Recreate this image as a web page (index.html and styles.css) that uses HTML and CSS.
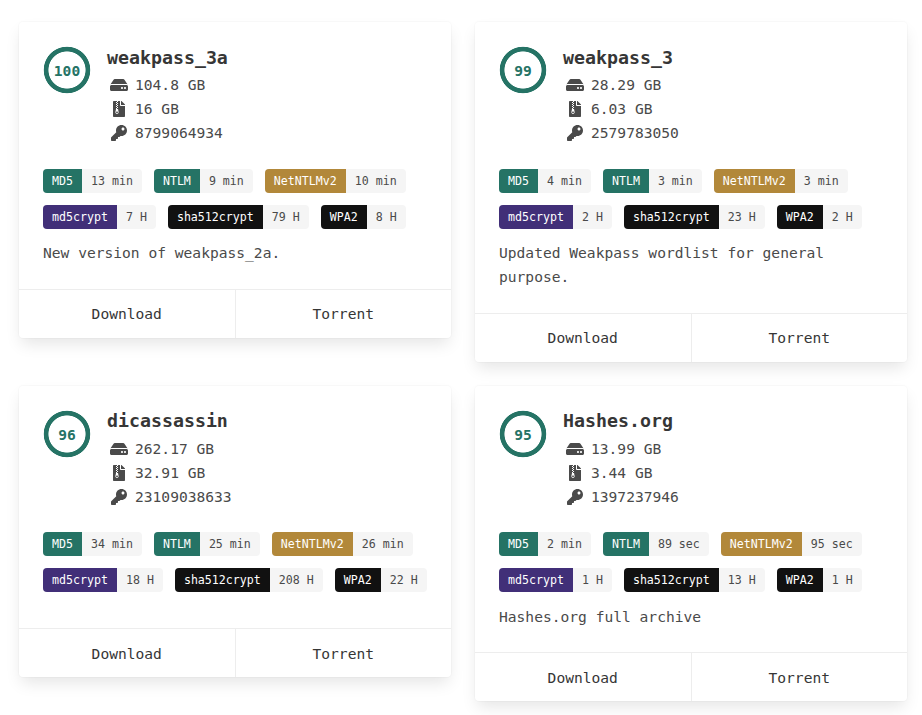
FILE: index.html
```html
<!DOCTYPE html>
<html lang="en">
<head>
<meta charset="utf-8">
<title>Wordlists</title>
<link rel="stylesheet" href="styles.css">
</head>
<body>
<svg class="sprite" aria-hidden="true">
  <symbol id="hdd" viewBox="0 0 576 512"><path d="M576 304v96c0 26.51-21.49 48-48 48H48c-26.51 0-48-21.49-48-48v-96c0-26.51 21.49-48 48-48h480c26.51 0 48 21.49 48 48zm-48-80a79.557 79.557 0 0 1 30.777 6.165L462.25 85.374A48.003 48.003 0 0 0 422.311 64H153.689a48 48 0 0 0-39.938 21.374L17.223 230.165A79.557 79.557 0 0 1 48 224h480zm-48 96c-17.673 0-32 14.327-32 32s14.327 32 32 32 32-14.327 32-32-14.327-32-32-32zm-96 0c-17.673 0-32 14.327-32 32s14.327 32 32 32 32-14.327 32-32-14.327-32-32-32z"/></symbol>
  <symbol id="zip" viewBox="0 0 384 512"><path d="M377 105L279.1 7c-4.5-4.5-10.6-7-17-7H256v128h128v-6.1c0-6.3-2.5-12.4-7-16.9zM128.4 336c-17.9 0-32.4 12.1-32.4 27 0 15 14.6 27 32.5 27s32.4-12.1 32.4-27-14.6-27-32.5-27zM224 136V0h-63.6v32h-32V0H24C10.7 0 0 10.7 0 24v464c0 13.3 10.7 24 24 24h336c13.3 0 24-10.7 24-24V160H248c-13.2 0-24-10.8-24-24zM95.9 32h32v32h-32zm32.3 384c-33.2 0-58-30.4-51.4-62.9L96.4 256v-32h32v-32h-32v-32h32v-32h-32V96h32V64h32v32h-32v32h32v32h-32v32h32v32h-32v32h22.1c5.7 0 10.7 4.1 11.8 9.7l17.3 87.7c6.4 32.4-18.4 62.6-51.4 62.6z"/></symbol>
  <symbol id="key" viewBox="0 0 512 512"><path d="M512 176.001C512 273.203 433.202 352 336 352c-11.22 0-22.19-1.062-32.827-3.069l-24.012 27.014A23.999 23.999 0 0 1 261.223 384H224v40c0 13.255-10.745 24-24 24h-40v40c0 13.255-10.745 24-24 24H24c-13.255 0-24-10.745-24-24v-78.059c0-6.365 2.529-12.47 7.029-16.971l161.802-161.802C163.108 213.814 160 195.271 160 176 160 78.798 238.797.001 335.999 0 433.488-.001 512 78.511 512 176.001zM336 128c0 26.51 21.49 48 48 48s48-21.49 48-48-21.49-48-48-48-48 21.49-48 48z"/></symbol>
</svg>
<main class="cards">
  <article class="card">
    <div class="content">
      <header class="media">
        <div class="score">100</div>
        <div class="info">
          <h2 class="title">weakpass_3a</h2>
          <p class="stat"><span class="icon"><svg class="hdd"><use href="#hdd"/></svg></span>104.8 GB</p>
          <p class="stat"><span class="icon"><svg class="zip"><use href="#zip"/></svg></span>16 GB</p>
          <p class="stat"><span class="icon"><svg class="key"><use href="#key"/></svg></span>8799064934</p>
        </div>
      </header>
      <div class="tags">
        <div class="tag"><b class="teal">MD5</b><span>13 min</span></div>
        <div class="tag"><b class="teal">NTLM</b><span>9 min</span></div>
        <div class="tag"><b class="gold">NetNTLMv2</b><span>10 min</span></div>
        <div class="tag"><b class="purple">md5crypt</b><span>7 H</span></div>
        <div class="tag"><b class="black">sha512crypt</b><span>79 H</span></div>
        <div class="tag"><b class="black">WPA2</b><span>8 H</span></div>
      </div>
      <p class="note">New version of weakpass_2a.</p>
    </div>
    <footer class="actions"><a>Download</a><a>Torrent</a></footer>
  </article>
  <article class="card">
    <div class="content">
      <header class="media">
        <div class="score">99</div>
        <div class="info">
          <h2 class="title">weakpass_3</h2>
          <p class="stat"><span class="icon"><svg class="hdd"><use href="#hdd"/></svg></span>28.29 GB</p>
          <p class="stat"><span class="icon"><svg class="zip"><use href="#zip"/></svg></span>6.03 GB</p>
          <p class="stat"><span class="icon"><svg class="key"><use href="#key"/></svg></span>2579783050</p>
        </div>
      </header>
      <div class="tags">
        <div class="tag"><b class="teal">MD5</b><span>4 min</span></div>
        <div class="tag"><b class="teal">NTLM</b><span>3 min</span></div>
        <div class="tag"><b class="gold">NetNTLMv2</b><span>3 min</span></div>
        <div class="tag"><b class="purple">md5crypt</b><span>2 H</span></div>
        <div class="tag"><b class="black">sha512crypt</b><span>23 H</span></div>
        <div class="tag"><b class="black">WPA2</b><span>2 H</span></div>
      </div>
      <p class="note">Updated Weakpass wordlist for general purpose.</p>
    </div>
    <footer class="actions"><a>Download</a><a>Torrent</a></footer>
  </article>
  <article class="card">
    <div class="content">
      <header class="media">
        <div class="score">96</div>
        <div class="info">
          <h2 class="title">dicassassin</h2>
          <p class="stat"><span class="icon"><svg class="hdd"><use href="#hdd"/></svg></span>262.17 GB</p>
          <p class="stat"><span class="icon"><svg class="zip"><use href="#zip"/></svg></span>32.91 GB</p>
          <p class="stat"><span class="icon"><svg class="key"><use href="#key"/></svg></span>23109038633</p>
        </div>
      </header>
      <div class="tags">
        <div class="tag"><b class="teal">MD5</b><span>34 min</span></div>
        <div class="tag"><b class="teal">NTLM</b><span>25 min</span></div>
        <div class="tag"><b class="gold">NetNTLMv2</b><span>26 min</span></div>
        <div class="tag"><b class="purple">md5crypt</b><span>18 H</span></div>
        <div class="tag"><b class="black">sha512crypt</b><span>208 H</span></div>
        <div class="tag"><b class="black">WPA2</b><span>22 H</span></div>
      </div>
      <p class="note"></p>
    </div>
    <footer class="actions"><a>Download</a><a>Torrent</a></footer>
  </article>
  <article class="card">
    <div class="content">
      <header class="media">
        <div class="score">95</div>
        <div class="info">
          <h2 class="title">Hashes.org</h2>
          <p class="stat"><span class="icon"><svg class="hdd"><use href="#hdd"/></svg></span>13.99 GB</p>
          <p class="stat"><span class="icon"><svg class="zip"><use href="#zip"/></svg></span>3.44 GB</p>
          <p class="stat"><span class="icon"><svg class="key"><use href="#key"/></svg></span>1397237946</p>
        </div>
      </header>
      <div class="tags">
        <div class="tag"><b class="teal">MD5</b><span>2 min</span></div>
        <div class="tag"><b class="teal">NTLM</b><span>89 sec</span></div>
        <div class="tag"><b class="gold">NetNTLMv2</b><span>95 sec</span></div>
        <div class="tag"><b class="purple">md5crypt</b><span>1 H</span></div>
        <div class="tag"><b class="black">sha512crypt</b><span>13 H</span></div>
        <div class="tag"><b class="black">WPA2</b><span>1 H</span></div>
      </div>
      <p class="note">Hashes.org full archive</p>
    </div>
    <footer class="actions"><a>Download</a><a>Torrent</a></footer>
  </article>
</main>
</body>
</html>
```
FILE: styles.css
```css
* { box-sizing: border-box; }
body {
  margin: 0;
  min-height: 715px;
  background: #fff;
  color: #4a4a4a;
  font: 14.6px/24px "DejaVu Sans Mono", monospace;
}
h2, p { margin: 0; }
.sprite { display: none; }
.cards {
  display: grid;
  grid-template-columns: 432px 432px;
  gap: 24px;
  align-items: start;
  padding: 22.1px 0 13px 19px;
}
.card {
  background: #fff;
  border-radius: 4px;
  box-shadow: 0 8px 16px -2px rgba(10, 10, 10, .1), 0 0 0 1px rgba(10, 10, 10, .02);
}
.content { padding: 24px 24px 23.3px; }
.media {
  display: flex;
  gap: 16px;
  margin-bottom: 23.3px;
}
.score {
  display: flex;
  align-items: center;
  justify-content: center;
  width: 48px;
  height: 48px;
  padding-top: 2px;
  border-radius: 50%;
  background: radial-gradient(circle, transparent 18.2px, #257365 18.9px, #257365 22.9px, transparent 23.6px);
  color: #257365;
  font-weight: 700;
}
.title {
  margin-bottom: 4px;
  padding-top: .7px;
  color: #363636;
  font-size: 18.25px;
  line-height: 22.5px;
}
.stat {
  display: flex;
  align-items: center;
  height: 24px;
}
.icon {
  display: flex;
  align-items: center;
  justify-content: center;
  width: 24px;
  height: 24px;
  margin-right: 4px;
}
.icon svg { height: 16px; fill: #4a4a4a; }
.hdd { width: 18px; }
.zip { width: 12px; }
.key { width: 16px; }
.tags {
  display: flex;
  flex-wrap: wrap;
  gap: 12px;
  margin-bottom: 12.7px;
}
.tag {
  display: flex;
  height: 24px;
  overflow: hidden;
  border-radius: 4px;
  background: #f5f5f5;
  font-size: 11.62px;
}
.tag b, .tag span { padding: 0 9px; }
.tag b { color: #fff; font-weight: 400; }
.teal { background: #257365; }
.gold { background: #b2883a; }
.purple { background: #412f78; }
.black { background: #111; }
.actions {
  display: flex;
  border-top: 1px solid #ededed;
}
.actions a {
  flex: 1;
  padding: 12.7px 12px 11.3px;
  color: #363636;
  text-align: center;
}
.actions a + a { border-left: 1px solid #ededed; }
```
